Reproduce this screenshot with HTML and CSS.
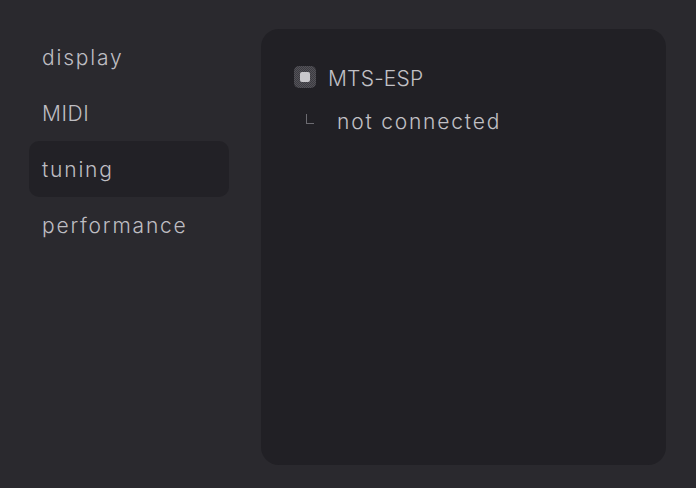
FILE: index.html
```html
<!DOCTYPE html>
<html>
<head>
<meta charset="utf-8">
<link rel="stylesheet" href="styles.css">
</head>
<body>
<div class="app">
  <nav class="sidebar">
    <div class="nav-item">display</div>
    <div class="nav-item caps">MIDI</div>
    <div class="nav-item active">tuning</div>
    <div class="nav-item">performance</div>
  </nav>
  <main class="panel">
    <div class="row">
      <span class="checkbox"><span class="check-inner"></span></span>
      <span class="label">MTS-ESP</span>
    </div>
    <div class="row sub">
      <span class="branch"></span>
      <span class="status">not connected</span>
    </div>
  </main>
</div>
</body>
</html>
```

FILE: styles.css
```css
html, body {
  margin: 0;
  padding: 0;
  background: #2a292e;
  height: 100%;
}
body {
  font-family: Inter, "DejaVu Sans", sans-serif;
  font-size: 21px;
  font-weight: 300;
  letter-spacing: 1.8px;
  color: #bebdc2;
}
.app {
  display: flex;
  padding: 29px 0 0 29px;
  gap: 32px;
}
.sidebar {
  display: flex;
  flex-direction: column;
  width: 200px;
}
.nav-item {
  height: 56px;
  display: flex;
  align-items: center;
  padding: 1px 0 0 13px;
  border-radius: 10px;
  box-sizing: border-box;
}
.nav-item.caps {
  letter-spacing: 0.6px;
}
.nav-item.active {
  background: #222126;
}
.panel {
  width: 405px;
  height: 436px;
  background: #212025;
  border-radius: 18px;
  box-sizing: border-box;
  padding: 37px 0 0 33px;
  display: flex;
  flex-direction: column;
  gap: 21px;
}
.row {
  display: flex;
  align-items: center;
  height: 22px;
}
.row > span:last-child {
  padding-top: 2px;
}
.checkbox {
  width: 22px;
  height: 22px;
  border-radius: 5px;
  box-sizing: border-box;
  background: repeating-conic-gradient(#545359 0 25%, #3c3b41 0 50%) 0 0 / 2px 2px;
  display: flex;
  align-items: center;
  justify-content: center;
  margin-right: 12px;
}
.check-inner {
  width: 10px;
  height: 10px;
  border-radius: 2px;
  background: #c9c8cc;
}
.label {
  color: #c2c1c6;
  letter-spacing: 0.2px;
}
.sub {
  padding-left: 12px;
}
.branch {
  width: 8px;
  height: 10px;
  border-left: 1px solid #6c6b71;
  border-bottom: 1px solid #6c6b71;
  box-sizing: border-box;
  margin-top: -2px;
  margin-right: 23px;
}
.status {
  color: #c2c1c6;
}
```
